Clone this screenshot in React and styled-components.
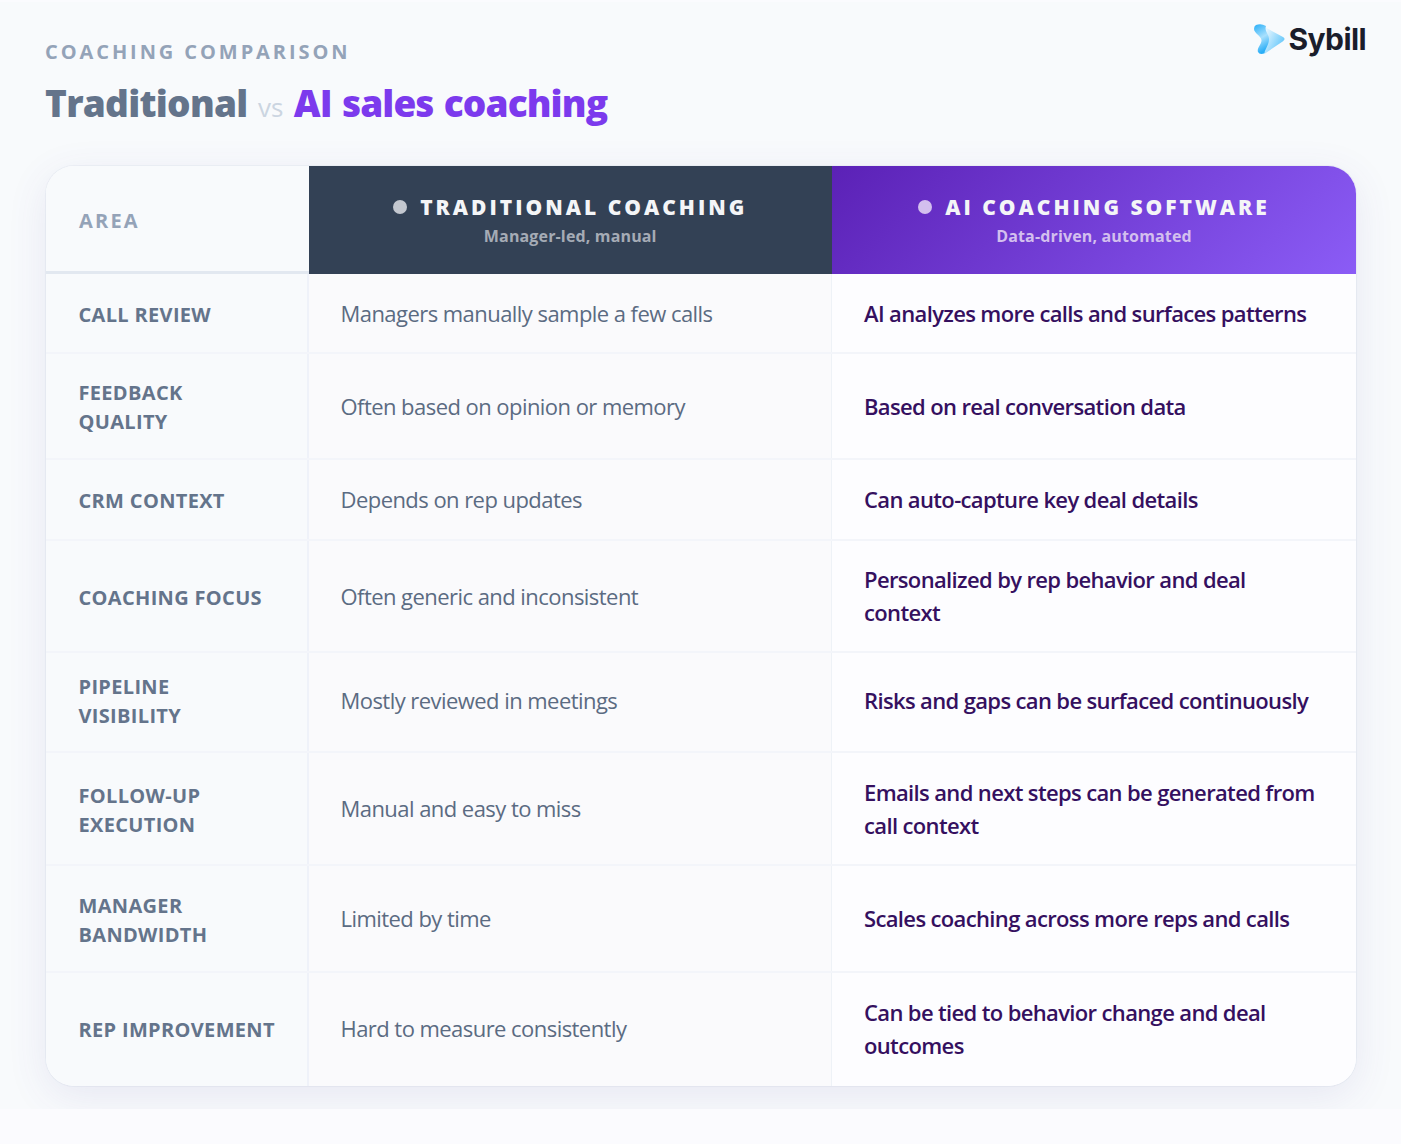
import React from 'react'
import styled, { createGlobalStyle } from 'styled-components'

const GlobalStyle = createGlobalStyle`
  html, body {
    margin: 0;
    padding: 0;
    background: #fbfbfe;
  }
  body {
    font-family: "Open Sans", "Noto Sans", "Liberation Sans", sans-serif;
  }
`

const rows = [
  { area: ['Call review'], old: 'Managers manually sample a few calls', ai: ['AI analyzes more calls and surfaces patterns'], h: 80 },
  { area: ['Feedback', 'quality'], old: 'Often based on opinion or memory', ai: ['Based on real conversation data'], h: 106 },
  { area: ['CRM context'], old: 'Depends on rep updates', ai: ['Can auto-capture key deal details'], h: 81 },
  { area: ['Coaching focus'], old: 'Often generic and inconsistent', ai: ['Personalized by rep behavior and deal', 'context'], h: 112 },
  { area: ['Pipeline', 'visibility'], old: 'Mostly reviewed in meetings', ai: ['Risks and gaps can be surfaced continuously'], h: 100, lift: true },
  { area: ['Follow-up', 'execution'], old: 'Manual and easy to miss', ai: ['Emails and next steps can be generated from', 'call context'], h: 113 },
  { area: ['Manager', 'bandwidth'], old: 'Limited by time', ai: ['Scales coaching across more reps and calls'], h: 107 },
  { area: ['Rep improvement'], old: 'Hard to measure consistently', ai: ['Can be tied to behavior change and deal', 'outcomes'], h: 113 },
]

const Logo = () => (
  <LogoWrap>
    <svg width="32" height="32" viewBox="0 0 32 32">
      <defs>
        <linearGradient id="logoLight" x1="0.2" y1="0.2" x2="1" y2="0.7">
          <stop offset="0" stopColor="#e6f6ff" />
          <stop offset="1" stopColor="#5cc4fa" />
        </linearGradient>
        <linearGradient id="logoBand" x1="0" y1="0" x2="0.3" y2="1">
          <stop offset="0" stopColor="#27aef8" />
          <stop offset="0.55" stopColor="#a8e0fd" />
          <stop offset="1" stopColor="#2aaef7" />
        </linearGradient>
      </defs>
      <path d="M9 2.5L30 14C32 15.2 32 17 30 18.2L12 30.5C10 31.5 8 30.5 8 28L9 4Z" fill="url(#logoLight)" />
      <path d="M3 2Q8 0 13 3C11 8 16 11 16 16C16 22 12 26 11.5 30Q7 32.5 5 29C3.5 25 9 21 8.5 17C8 13 1 10 1 6Q1 3 3 2Z" fill="url(#logoBand)" />
    </svg>
    <LogoText>Sybill</LogoText>
  </LogoWrap>
)

const App = () => (
  <Page>
    <GlobalStyle />
    <Header>
      <HeaderText>
        <Eyebrow>Coaching comparison</Eyebrow>
        <Title>
          Traditional <Vs>vs</Vs> <Accent>AI sales coaching</Accent>
        </Title>
      </HeaderText>
      <Logo />
    </Header>
    <Table>
      <HeadRow>
        <AreaHead>Area</AreaHead>
        <ColumnHead>
          <ColumnTitle><Dot />Traditional coaching</ColumnTitle>
          <ColumnSub>Manager-led, manual</ColumnSub>
        </ColumnHead>
        <ColumnHead $ai>
          <ColumnTitle><Dot $ai />AI coaching software</ColumnTitle>
          <ColumnSub $ai>Data-driven, automated</ColumnSub>
        </ColumnHead>
      </HeadRow>
      {rows.map((row, i) => (
        <Row key={row.area[0]} $height={row.h} $last={i === rows.length - 1}>
          <AreaCell $lift={row.lift}>
            {row.area.map((line) => <Line key={line}>{line}</Line>)}
          </AreaCell>
          <OldCell $lift={row.lift}>{row.old}</OldCell>
          <AiCell $lift={row.lift}>
            {row.ai.map((line) => <Line key={line}>{line}</Line>)}
          </AiCell>
        </Row>
      ))}
    </Table>
  </Page>
)

export default App

const Page = styled.div`
  box-sizing: border-box;
  width: 1401px;
  height: 1107px;
  margin-top: 2px;
  padding: 38px 45px 0 46px;
  background: #f8fafc;
  overflow: hidden;
`

const Header = styled.header`
  display: flex;
  justify-content: space-between;
  align-items: flex-start;
  height: 126px;
`

const HeaderText = styled.div`
  margin-left: -1px;
`

const Eyebrow = styled.div`
  font-size: 20px;
  line-height: 24px;
  font-weight: 700;
  letter-spacing: 2.92px;
  text-transform: uppercase;
  color: #94a3b8;
`

const Title = styled.h1`
  margin: 15px 0 0;
  font-size: 37px;
  line-height: 48px;
  font-weight: 800;
  letter-spacing: -0.72px;
  word-spacing: 1.5px;
  color: #64748b;
`

const Vs = styled.span`
  font-size: 26px;
  font-weight: 400;
  letter-spacing: 0;
  color: #cbd5e1;
`

const Accent = styled.span`
  letter-spacing: -0.9px;
  color: #7c3aed;
`

const LogoWrap = styled.div`
  display: flex;
  align-items: center;
  gap: 4px;
  margin: -19px -10px 0 0;
`

const LogoText = styled.span`
  font-family: Inter, "Liberation Sans", sans-serif;
  font-size: 30px;
  font-weight: 700;
  letter-spacing: -0.6px;
  color: #1a1d2b;
`

const Table = styled.div`
  width: 1310px;
  height: 920px;
  border-radius: 28px;
  overflow: hidden;
  box-shadow: 0 10px 40px rgba(76, 70, 160, 0.1), 0 0 0 1px rgba(226, 232, 240, 0.45);
  background: #fdfdff;
`

const HeadRow = styled.div`
  display: grid;
  grid-template-columns: 262.5px 523.5px 524px;
  height: 108px;
`

const AreaHead = styled.div`
  box-sizing: border-box;
  display: flex;
  align-items: center;
  padding: 3px 33px 0;
  background: #f8fafc;
  border-bottom: 3px solid #e2e8f0;
  font-size: 20px;
  font-weight: 700;
  letter-spacing: 2.2px;
  text-transform: uppercase;
  color: #94a3b8;
`

const ColumnHead = styled.div`
  display: flex;
  flex-direction: column;
  align-items: center;
  padding-top: 26px;
  box-sizing: border-box;
  background: ${(p) => (p.$ai ? 'linear-gradient(135deg, #5b21b6 0%, #8b5cf6 100%)' : '#334155')};
`

const ColumnTitle = styled.div`
  display: flex;
  align-items: center;
  gap: 13px;
  font-size: 21px;
  line-height: 30px;
  font-weight: 800;
  letter-spacing: 3px;
  text-transform: uppercase;
  color: #f4f5f7;
  white-space: nowrap;
`

const Dot = styled.span`
  width: 14px;
  height: 14px;
  border-radius: 50%;
  background: ${(p) => (p.$ai ? '#d3bfee' : '#c3c7cf')};
`

const ColumnSub = styled.div`
  margin-top: 4px;
  font-size: 16px;
  line-height: 20px;
  font-weight: 700;
  letter-spacing: 0.15px;
  color: ${(p) => (p.$ai ? '#d3bfee' : '#a5abb5')};
`

const Row = styled.div`
  display: grid;
  grid-template-columns: 262.5px 523.5px 524px;
  height: ${(p) => p.$height}px;
  box-sizing: border-box;
  border-bottom: ${(p) => (p.$last ? 'none' : '2px solid #f3f5fa')};

  &:last-child > div {
    padding-bottom: 2px;
  }
`

const Cell = styled.div`
  display: flex;
  flex-direction: column;
  justify-content: center;
  padding: 0 0 ${(p) => (p.$lift ? 3 : 0)}px 32px;
  box-sizing: border-box;
`

const AreaCell = styled(Cell)`
  padding-left: 32.5px;
  padding-top: ${(p) => (p.$lift ? 0 : 2)}px;
  background: #f8fafc;
  border-right: 2px solid #eff2f9;
  font-size: 20px;
  line-height: 29px;
  font-weight: 700;
  letter-spacing: 0.33px;
  text-transform: uppercase;
  color: #64748b;
`

const OldCell = styled(Cell)`
  background: #fafafc;
  border-right: 1px solid #eef2f7;
  font-size: 22px;
  line-height: 33px;
  letter-spacing: -0.55px;
  color: #5b6b82;
`

const AiCell = styled(Cell)`
  background: #fdfdff;
  font-size: 22px;
  line-height: 33px;
  font-weight: 550;
  letter-spacing: -0.64px;
  color: #35105f;
`

const Line = styled.div`
  white-space: nowrap;
`
